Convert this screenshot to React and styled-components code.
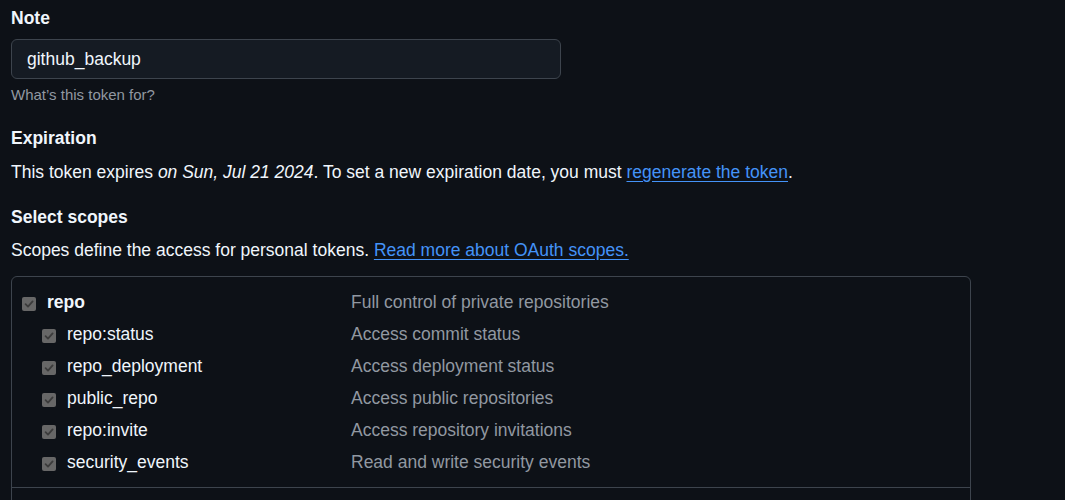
import React from "react";
import styled, { createGlobalStyle } from "styled-components";

const GlobalStyle = createGlobalStyle`
  html, body {
    margin: 0;
    padding: 0;
    background: #0d1117;
  }
  body {
    font-family: "Liberation Sans", Arial, sans-serif;
    color: #f0f6fc;
    font-size: 17.5px;
    line-height: 24px;
  }
`;

const Page = styled.div`
  padding: 6px 11px 0 11px;
  width: 960px;
`;

const Label = styled.div`
  font-weight: 700;
  font-size: 17.5px;
  line-height: 24px;
  margin-bottom: ${p => p.$gap || 0}px;
`;

const Input = styled.input`
  display: block;
  box-sizing: border-box;
  width: 550px;
  height: 40px;
  padding: 0 15px;
  background: #151b23;
  border: 1px solid #3d444d;
  border-radius: 6px;
  color: #f0f6fc;
  font-family: inherit;
  font-size: 17.5px;
  outline: none;
`;

const Hint = styled.div`
  margin-top: 5px;
  font-size: 15px;
  line-height: 21px;
  color: #9198a1;
`;

const Section = styled.div`
  margin-top: ${p => p.$top}px;
`;

const Text = styled.p`
  margin: ${p => p.$top}px 0 0 0;
  font-size: 17.5px;
  line-height: 24px;
`;

const Link = styled.a`
  color: #4493f8;
  text-decoration: underline;
  text-underline-offset: 3px;
  cursor: pointer;
`;

const ScopeBox = styled.div`
  margin-top: 14px;
  border: 1px solid #3d444d;
  border-radius: 6px;
`;

const Group = styled.div`
  padding: 9px 10px;
  & + & {
    border-top: 1px solid #3d444d;
  }
`;

const Row = styled.div`
  display: grid;
  grid-template-columns: 329px 1fr;
  height: 32px;
  align-items: center;
`;

const Name = styled.label`
  display: flex;
  align-items: center;
  padding-left: ${p => (p.$sub ? 20 : 0)}px;
  font-weight: ${p => (p.$sub ? 400 : 700)};
  color: #f0f6fc;
`;

const Box = styled.span`
  display: inline-flex;
  align-items: center;
  justify-content: center;
  width: 14px;
  height: 14px;
  margin: 4px 11px 0 0;
  border-radius: 2px;
  background: #676767;
  flex: none;
`;

const Desc = styled.div`
  color: #9198a1;
`;

const Check = () => (
  <Box>
    <svg width="10" height="10" viewBox="0 0 10 10">
      <path
        d="M1.6 5.2 L4 7.6 L8.6 2.4"
        fill="none"
        stroke="#3b3b3b"
        strokeWidth="1.8"
        strokeLinecap="round"
        strokeLinejoin="round"
      />
    </svg>
  </Box>
);

const scopes = [
  { name: "repo", desc: "Full control of private repositories" },
  { name: "repo:status", desc: "Access commit status", sub: true },
  { name: "repo_deployment", desc: "Access deployment status", sub: true },
  { name: "public_repo", desc: "Access public repositories", sub: true },
  { name: "repo:invite", desc: "Access repository invitations", sub: true },
  { name: "security_events", desc: "Read and write security events", sub: true }
];

export default function App() {
  return (
    <>
      <GlobalStyle />
      <Page>
        <Label $gap={9}>Note</Label>
        <Input defaultValue="github_backup" />
        <Hint>What’s this token for?</Hint>

        <Section $top={21}>
          <Label>Expiration</Label>
          <Text $top={10}>
            This token expires <em>on Sun, Jul 21 2024</em>. To set a new
            expiration date, you must <Link>regenerate the token</Link>.
          </Text>
        </Section>

        <Section $top={21}>
          <Label>Select scopes</Label>
          <Text $top={9}>
            Scopes define the access for personal tokens.{" "}
            <Link>Read more about OAuth scopes.</Link>
          </Text>
        </Section>

        <ScopeBox>
          <Group>
            {scopes.map(s => (
              <Row key={s.name}>
                <Name $sub={s.sub}>
                  <Check />
                  {s.name}
                </Name>
                <Desc>{s.desc}</Desc>
              </Row>
            ))}
          </Group>
          <Group>
            <Row />
          </Group>
        </ScopeBox>
      </Page>
    </>
  );
}
